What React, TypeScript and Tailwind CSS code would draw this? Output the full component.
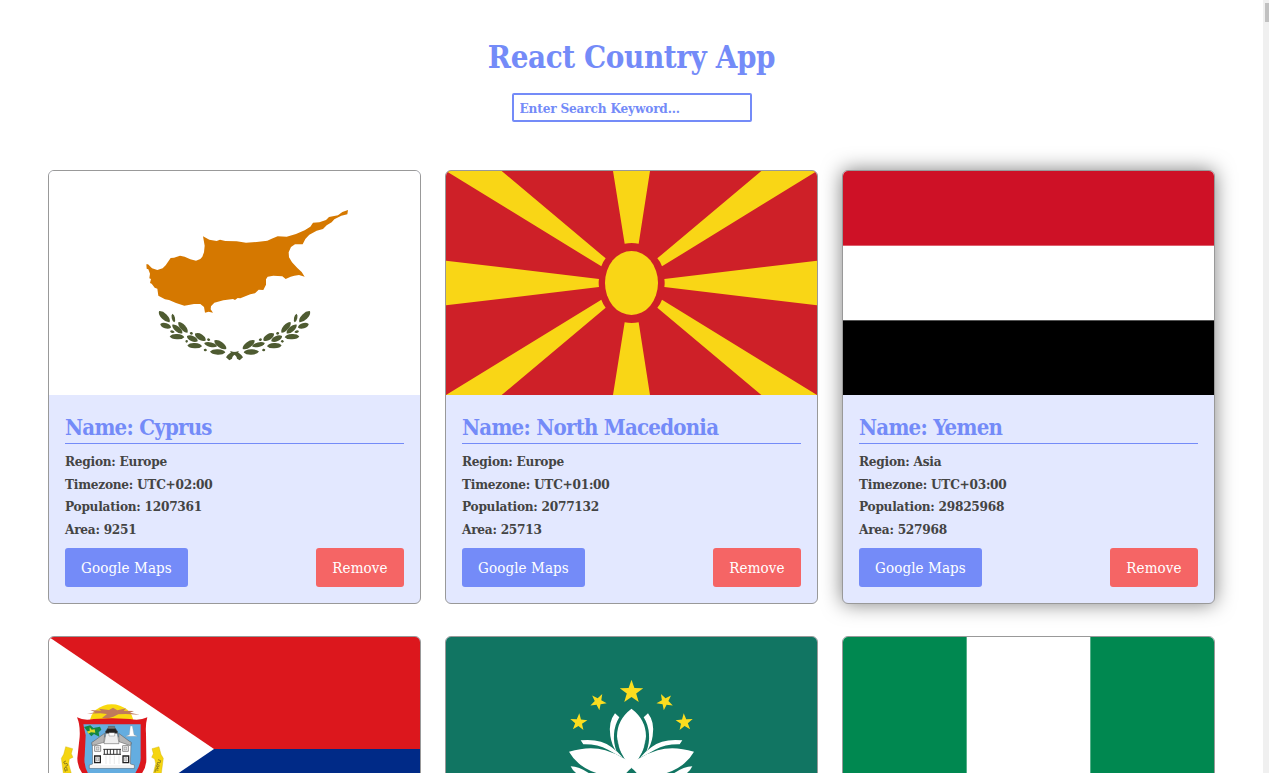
import type { ReactNode } from "react";

type Details = {
  region: string;
  timezone: string;
  population: number;
  area: number;
};

type Country = {
  id: string;
  name?: string;
  details?: Details;
  flag: ReactNode;
  raised?: boolean;
};

function FlagFrame({ viewBox, children }: { viewBox: string; children: ReactNode }) {
  return (
    <svg className="block h-56 w-full shrink-0" viewBox={viewBox} preserveAspectRatio="none">
      {children}
    </svg>
  );
}

// cx, cy, rx, ry, rotation
const leaves: number[][] = [
  [103, 365, 23, 9, 46],
  [130, 369, 13, 5, 78],
  [107, 392, 17, 8, 18],
  [142, 402, 20, 8, 42],
  [159, 397, 21, 8, 50],
  [141, 425, 22, 8, 4],
  [187, 431, 18, 8, 26],
  [211, 426, 19, 9, 33],
  [194, 452, 22, 8, 4],
  [242, 449, 20, 7, 14],
  [271, 449, 22, 9, 36],
  [263, 471, 23, 8, 3],
  [127, 410, 7, 4, 15],
  [184, 415, 5, 4, 20],
  [170, 439, 4, 4, 0],
  [236, 434, 5, 4, 20],
  [226, 465, 5, 4, 20],
];

function Branch() {
  return (
    <g fill="#4e5b31">
      {leaves.map(([cx, cy, rx, ry, r]) => (
        <path
          key={`${cx}-${cy}`}
          transform={`translate(${cx} ${cy}) rotate(${r})`}
          d={`M${-rx} 0Q${-rx * 0.7} ${-ry} 0 ${-ry}Q${rx * 0.8} ${-ry} ${rx} 0Q${rx * 0.7} ${ry} 0 ${ry}Q${-rx * 0.8} ${ry} ${-rx} 0Z`}
        />
      ))}
      <path d="M300 468Q312 472 322 470Q334 478 339 487L329 496L321 491Q320 480 306 476Z" />
    </g>
  );
}

function CyprusFlag() {
  return (
    <FlagFrame viewBox="-243 -72 1113 672">
      <rect x="-243" y="-72" width="1113" height="672" fill="#fff" />
      <path
        fill="#d57800"
        d="M49 208L54 208L66 220L82 225L98 220L107 211L122 189L132 188L150 182L164 185L181 193L198 197L211 192L217 185L222 172L224 152L219 124L238 134L260 138L270 134L286 138L320 139L348 143L380 141L412 137L425 131L443 124L470 125L498 117L524 106L541 95L549 83L568 82L588 75L597 66L624 61L637 51L654 45L652 58L634 62L613 73L605 82L590 91L579 102L560 107L538 119L526 132L518 148L495 148L483 156L476 172L477 187L486 202L502 219L515 231L524 245L507 240L493 242L482 245L467 252L457 244L430 242L413 245L408 253L408 269L400 285L386 284L375 295L361 298L331 310L323 309L315 315L309 312L280 316L253 323L243 334L242 343L249 353L236 350L225 353L222 336L211 327L192 327L163 332L138 324L117 315L105 313L85 302L82 281L74 278L65 266L60 264L63 252L58 250L60 236L55 223L50 221Z"
      />
      <Branch />
      <g transform="matrix(-1 0 0 1 627 0)">
        <Branch />
      </g>
    </FlagFrame>
  );
}

function MacedoniaFlag() {
  return (
    <FlagFrame viewBox="18 18 1113 672">
      <rect x="18" y="18" width="1113" height="672" fill="#ce2028" />
      <g fill="#f9d616">
        <path d="M18 18H185L497 280Q489 290 484 304ZM1131 18H964L652 280Q661 290 666 304ZM18 690H185L497 428Q489 418 484 404ZM1131 690H964L652 428Q661 418 666 404Z" />
        <path d="M519 18H630L596 236Q575 232 554 236ZM519 690H630L596 472Q575 476 554 472ZM18 287L477 342Q475 354 477 366L18 421ZM1131 287L673 342Q675 354 673 366L1131 421Z" />
        <ellipse cx="574.5" cy="354" rx="79.5" ry="96" />
      </g>
    </FlagFrame>
  );
}

function YemenFlag() {
  return (
    <FlagFrame viewBox="0 0 3 3">
      <rect width="3" height="3" fill="#fff" />
      <rect width="3" height="1" fill="#ce1126" />
      <rect y="2" width="3" height="1" fill="#000" />
    </FlagFrame>
  );
}

function SintMaartenFlag() {
  return (
    <FlagFrame viewBox="27 21 1113 672">
      <rect x="27" y="21" width="1113" height="336" fill="#dc171d" />
      <rect x="27" y="357" width="1113" height="336" fill="#002a87" />
      <path d="M27 21L522 357L27 693Z" fill="#fff" />
      <ellipse cx="215" cy="276" rx="65" ry="53" fill="#f9d90f" />
      <path
        fill="#bf7a5c"
        d="M141 251L166 247L151 240L183 242L177 236L207 240L219 233L232 241L259 235L251 242L282 243L270 248L299 254L257 252L235 253L220 260L205 265L186 264L201 252L180 250Z"
      />
      <path fill="#dc171d" d="M111 262Q132 273 161 267L216 265L270 267Q299 273 322 262Q316 283 318 310L319 385Q320 413 302 435H131Q112 413 112 385L119 320Q121 285 111 262Z" />
      <path fill="#64ade0" d="M130 283H302V378Q304 405 282 435H147Q130 408 134 378L137 316Z" />
      <path fill="#138642" d="M132 291L151 286L160 294L180 290L184 299L176 307L178 320L162 312L154 319L143 307L139 300Z" />
      <path fill="#d8d92a" d="M141 304L149 303L149 292L155 299L164 298L166 308L153 307L145 311Z" />
      <path fill="#fff" stroke="#999" strokeWidth="1" d="M271 288H277L282 314L292 319H257L268 314Z" />
      <g stroke="#555" strokeWidth="1.5">
        <path fill="#fff" d="M157 337L198 319H232L273 337L271 402L283 405V415H148V405L158 402Z" />
        <path fill="#b5b5b5" d="M155 338L194 310L192 337L157 347ZM236 310L274 338L271 347L237 335Z" />
        <path fill="#eee" d="M199 304H231L237 341H192Z" />
        <path fill="#222" d="M197 304L203 295H226L232 304V310H197Z" />
        <path fill="#777" d="M205 289H224V296H205Z" />
        <path fill="none" strokeWidth="2" d="M164 347H182V364H164ZM248 347H265V364H248Z" />
        <path fill="none" stroke="#222" strokeWidth="4" d="M164 378H181V398H164ZM249 378H266V398H249Z" />
        <path fill="#ddd" strokeWidth="1" d="M169 351H177V360H169ZM252 351H260V360H252ZM169 383H176V393H169ZM254 383H261V393H254Z" />
        <path fill="none" stroke="#333" strokeWidth="3" d="M190 358H243M190 373H243M193 357V373M202 357V373M211 357V373M221 357V373M231 357V373M240 357V373" />
        <path fill="none" stroke="#bbb" strokeWidth="1" d="M198 376V402M210 376V402M223 376V402M237 376V402M150 408H281" />
        <path fill="#fff" strokeWidth="1" d="M207 308H224V318H207Z" />
      </g>
      <g fill="#f5d511" stroke="#c8a900" strokeWidth="1">
        <path d="M77 350L98 356L94 371L99 382L88 387L86 401L94 430H70L64 385L71 373Z" />
        <path d="M357 350L336 356L340 371L335 382L344 387L347 401L340 430H364L370 385L363 373Z" />
      </g>
      <g fill="none" stroke="#665b22" strokeWidth="2">
        <path d="M78 393L71 396L74 402L81 400L83 406L76 409M80 411L73 414L76 425M80 412L82 422M78 418V423" />
        <path d="M354 389L362 392L360 399L353 397L351 403L359 406M358 410L349 407L355 416L346 414M355 421L346 419L345 427" />
      </g>
    </FlagFrame>
  );
}

// cx, cy, radius, rotation
const stars: number[][] = [
  [244.5, 66, 37, 0],
  [144.5, 95, 26, 28],
  [345, 95, 26, -28],
  [86, 157, 27, 4],
  [403, 157, 27, -4],
];

function starPoints(cx: number, cy: number, r: number, turn: number) {
  return Array.from({ length: 10 }, (_, i) => {
    const radius = i % 2 ? r * 0.4 : r;
    const a = ((i * 36 - 90 + turn) * Math.PI) / 180;
    return `${cx + radius * Math.cos(a)},${cy + radius * Math.sin(a)}`;
  }).join(" ");
}

function LotusSide() {
  return (
    <g fill="#fff">
      <path d="M195 130Q174 157 181 198Q185 226 200 246Q190 219 192 193Q194 164 208 142Z" />
      <path d="M92 211Q151 205 184 231Q205 246 219 263Q196 252 174 239Q142 222 100 223Z" />
      <path d="M57 245Q120 226 166 241Q197 250 225 267Q242 279 245 292V309H139Q83 291 57 245Z" />
      <path d="M62 289Q87 290 116 309H78Q66 299 62 289Z" />
    </g>
  );
}

function MacauFlag() {
  return (
    <FlagFrame viewBox="-312 -99 1113 672">
      <rect x="-312" y="-99" width="1113" height="672" fill="#117562" />
      {stars.map(([x, y, r, turn]) => (
        <polygon key={x} points={starPoints(x, y, r, turn)} fill="#fbdd1f" />
      ))}
      <LotusSide />
      <g transform="matrix(-1 0 0 1 489 0)">
        <LotusSide />
      </g>
      <path d="M244.5 116Q201 149 201 199Q204 240 222 263L240 292H249L267 263Q285 240 288 199Q288 149 244.5 116Z" fill="#fff" />
      <path d="M202 211Q205 242 219 261M287 211Q284 242 270 261" fill="none" stroke="#117562" strokeWidth="1.5" />
      <path d="M229 309Q235 301 244.5 294Q254 301 260 309Z" fill="#117562" />
    </FlagFrame>
  );
}

function NigeriaFlag() {
  return (
    <FlagFrame viewBox="0 0 3 3">
      <rect width="3" height="3" fill="#fff" />
      <rect width="1" height="3" fill="#008850" />
      <rect x="2" width="1" height="3" fill="#008850" />
    </FlagFrame>
  );
}

const countries: Country[] = [
  {
    id: "cy",
    name: "Cyprus",
    details: { region: "Europe", timezone: "UTC+02:00", population: 1207361, area: 9251 },
    flag: <CyprusFlag />,
  },
  {
    id: "mk",
    name: "North Macedonia",
    details: { region: "Europe", timezone: "UTC+01:00", population: 2077132, area: 25713 },
    flag: <MacedoniaFlag />,
  },
  {
    id: "ye",
    name: "Yemen",
    details: { region: "Asia", timezone: "UTC+03:00", population: 29825968, area: 527968 },
    flag: <YemenFlag />,
    raised: true,
  },
  { id: "sx", flag: <SintMaartenFlag /> },
  { id: "mo", flag: <MacauFlag /> },
  { id: "ng", flag: <NigeriaFlag /> },
];

function CountryCard({ name, details, flag, raised }: Country) {
  return (
    <article
      className={`flex h-[434px] flex-col overflow-hidden rounded-md border border-[#999] bg-[#e3e8ff] ${
        raised ? "shadow-[0_0_20px_rgba(0,0,0,0.5)]" : ""
      }`}
    >
      {flag}
      {details && (
        <div className="flex flex-col px-4 pt-4">
          <h2 className="h-[33px] border-b border-[#748bf8] text-[22px] leading-[33px] font-bold tracking-[-0.75px] whitespace-nowrap text-[#748bf8]">
            Name: {name}
          </h2>
          <div className="mt-[6.4px] text-[13.5px] leading-[22.4px] font-bold tracking-[-0.25px] text-[#444]">
            <p>Region: {details.region}</p>
            <p>Timezone: {details.timezone}</p>
            <p>Population: {details.population}</p>
            <p>Area: {details.area}</p>
          </div>
          <div className="mt-[7.6px] flex justify-between text-[15px] tracking-[0.1px] text-white">
            <button className="h-[39px] w-[123px] rounded-[3px] bg-[#748bf8] pt-0.5 whitespace-nowrap">Google Maps</button>
            <button className="h-[39px] w-[88px] rounded-[3px] bg-[#f56565] pt-0.5">Remove</button>
          </div>
        </div>
      )}
    </article>
  );
}

export default function App() {
  return (
    <div className="flex h-screen overflow-hidden bg-white font-['Roboto_Slab','DejaVu_Serif_Condensed','DejaVu_Serif',serif]">
      <main className="w-[1263px] shrink-0 overflow-hidden px-12 pt-8">
        <header className="flex flex-col items-center">
          <h1 className="h-[61px] text-[31px] leading-[50px] font-bold tracking-[-0.4px] text-[#748bf8]">React Country App</h1>
          <input
            className="h-[29px] w-60 rounded-[2px] border-2 border-[#748bf8] px-1.5 text-[13.5px] font-bold tracking-[-0.18px] text-[#748bf8] outline-none placeholder:text-[#748bf8] placeholder:opacity-100"
            placeholder="Enter Search Keyword..."
          />
        </header>
        <section className="mt-12 grid grid-cols-3 gap-x-6 gap-y-8">
          {countries.map((country) => (
            <CountryCard key={country.id} {...country} />
          ))}
        </section>
      </main>
      <div className="flex h-full w-1.5 flex-col bg-[#f0f0f0] pt-[3px] pl-0.5">
        <div className="h-[19px] bg-[#c1c1c1]" />
      </div>
    </div>
  );
}
